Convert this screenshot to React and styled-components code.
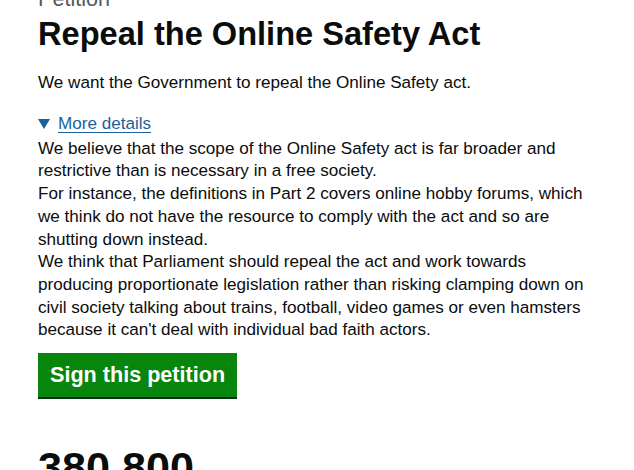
import React from "react";
import styled, { createGlobalStyle } from "styled-components";

const Global = createGlobalStyle`
  html, body {
    margin: 0;
    padding: 0;
    background: #ffffff;
    overflow: hidden;
  }
  body {
    font-family: "Liberation Sans", Arial, sans-serif;
    color: #0b0c0c;
  }
`;

const Page = styled.main`
  display: flex;
  flex-direction: column;
  align-items: flex-start;
  padding: 0 0 0 38px;
  margin-top: -14px;
  width: 596px;
`;

const Caption = styled.span`
  display: block;
  font-size: 21.6px;
  line-height: 25px;
  color: #505a5f;
`;

const Title = styled.h1`
  margin: 4.8px 0 0;
  font-size: 32.6px;
  line-height: 36px;
  font-weight: 700;
  color: #0b0c0c;
`;

const Lead = styled.p`
  margin: 20.4px 0 0;
  font-size: 17.1px;
  line-height: 22.7px;
`;

const Details = styled.details`
  margin-top: 18.3px;
  width: 100%;
`;

const Summary = styled.summary`
  display: flex;
  align-items: center;
  gap: 8px;
  list-style: none;
  cursor: pointer;
  font-size: 17.1px;
  line-height: 22.7px;
  color: #1b5f9b;
  &::-webkit-details-marker {
    display: none;
  }
`;

const Triangle = styled.span`
  width: 0;
  height: 0;
  border-left: 6.2px solid transparent;
  border-right: 6.2px solid transparent;
  border-top: 10px solid #1b5f9b;
  margin-top: -2px;
`;

const SummaryText = styled.span`
  text-decoration: underline;
  text-decoration-thickness: 1px;
  text-underline-offset: 2.5px;
`;

const DetailText = styled.p`
  margin: 1.8px 0 0;
  font-size: 17.1px;
  line-height: 22.7px;
  white-space: nowrap;
`;

const StartButton = styled.button`
  margin-top: 11px;
  height: 44px;
  padding: 0 12px;
  border: none;
  border-radius: 0;
  background: #07850c;
  color: #ffffff;
  font-family: "Liberation Sans", Arial, sans-serif;
  font-size: 21.6px;
  font-weight: 700;
  line-height: 1;
  box-shadow: 0 2px 0 #002d18;
  cursor: pointer;
`;

const Count = styled.p`
  margin: 49.4px 0 0;
  display: flex;
  align-items: baseline;
  gap: 17px;
  font-weight: 700;
`;

const CountNumber = styled.span`
  font-size: 43.2px;
  line-height: 1;
`;

const CountLabel = styled.span`
  font-size: 17.1px;
  line-height: 1;
`;

const detailLines = [
  "We believe that the scope of the Online Safety act is far broader and",
  "restrictive than is necessary in a free society.",
  "For instance, the definitions in Part 2 covers online hobby forums, which",
  "we think do not have the resource to comply with the act and so are",
  "shutting down instead.",
  "We think that Parliament should repeal the act and work towards",
  "producing proportionate legislation rather than risking clamping down on",
  "civil society talking about trains, football, video games or even hamsters",
  "because it can't deal with individual bad faith actors.",
];

export default function App() {
  return (
    <>
      <Global />
      <Page>
        <Caption>Petition</Caption>
        <Title>Repeal the Online Safety Act</Title>
        <Lead>We want the Government to repeal the Online Safety act.</Lead>
        <Details open>
          <Summary>
            <Triangle />
            <SummaryText>More details</SummaryText>
          </Summary>
          <DetailText>
            {detailLines.map((line, i) => (
              <React.Fragment key={i}>
                {line}
                {i < detailLines.length - 1 && <br />}
              </React.Fragment>
            ))}
          </DetailText>
        </Details>
        <StartButton type="button">Sign this petition</StartButton>
        <Count>
          <CountNumber>380,800</CountNumber>
          <CountLabel>signatures</CountLabel>
        </Count>
      </Page>
    </>
  );
}
